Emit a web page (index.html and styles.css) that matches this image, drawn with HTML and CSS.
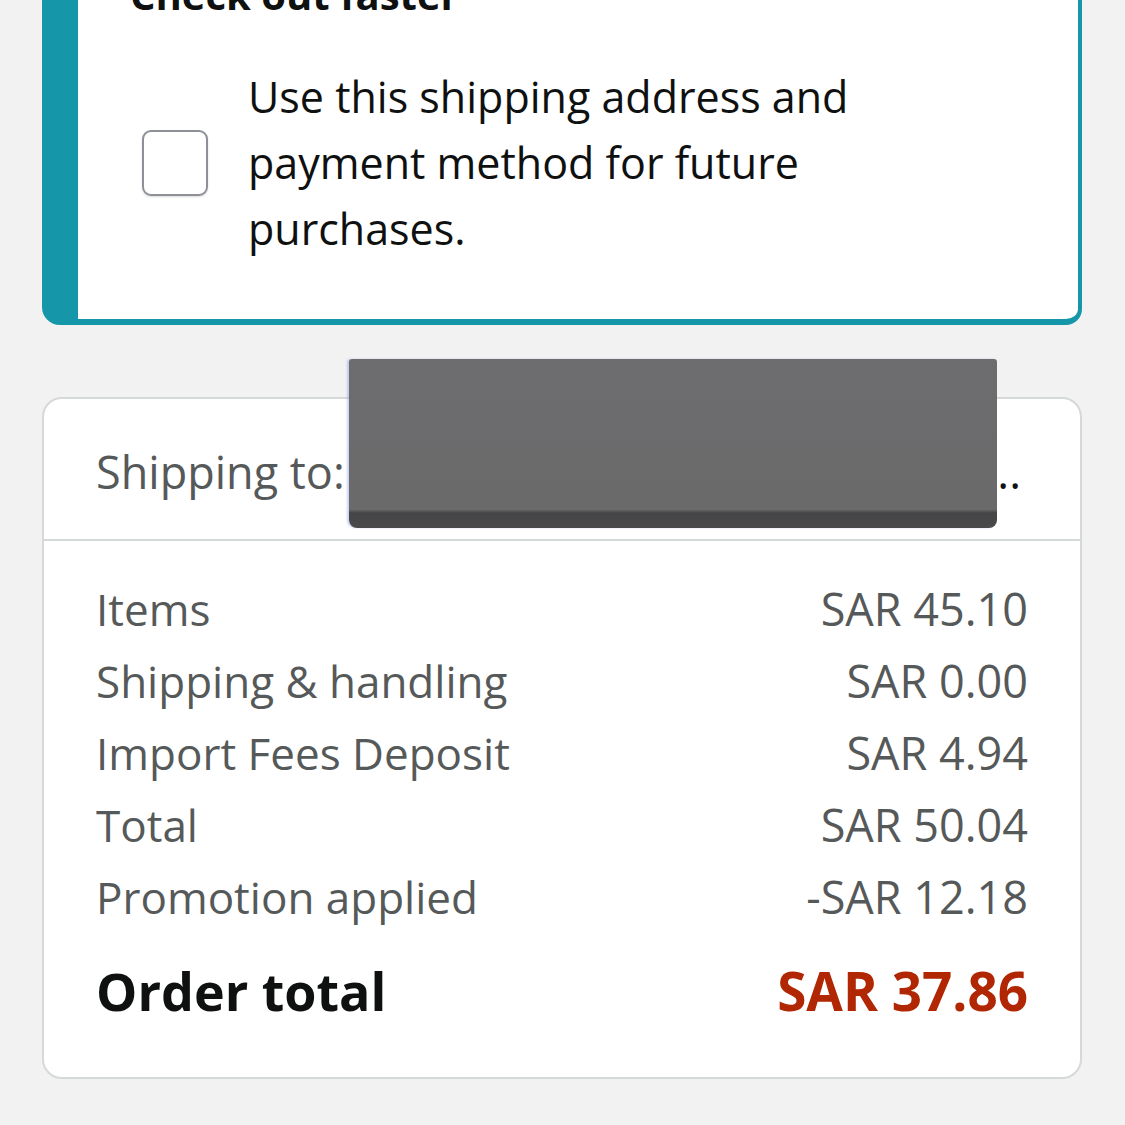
FILE: index.html
```html
<!DOCTYPE html>
<html lang="en">
<head>
    <meta charset="UTF-8">
    <meta name="viewport" content="width=device-width, initial-scale=1.0">
    <title>Checkout</title>
    <link rel="stylesheet" href="styles.css">
</head>
<body>
    <div class="page">
        <div class="faster-card">
            <h2 class="faster-title">Check out faster</h2>
            <label class="save-row">
                <span class="checkbox"></span>
                <span class="save-text">Use this shipping address and payment method for future purchases.</span>
            </label>
        </div>

        <div class="summary-card">
            <div class="ship-row">
                <span class="ship-label">Shipping to:</span>
                <span class="ship-addr">...</span>
                <div class="redact"></div>
            </div>
            <div class="lines">
                <div class="line"><span>Items</span><span>SAR 45.10</span></div>
                <div class="line"><span>Shipping &amp; handling</span><span>SAR 0.00</span></div>
                <div class="line"><span>Import Fees Deposit</span><span>SAR 4.94</span></div>
                <div class="line"><span>Total</span><span>SAR 50.04</span></div>
                <div class="line"><span>Promotion applied</span><span>-SAR 12.18</span></div>
                <div class="line total"><span>Order total</span><span class="price">SAR 37.86</span></div>
            </div>
        </div>
    </div>
</body>
</html>
```

FILE: styles.css
```css
body { margin: 0; background: #f2f2f2; font-family: "Open Sans", "Noto Sans", Arial, sans-serif; color: #0f1111; }
.page { padding: 0 43px 0 42px; height: 1125px; overflow: hidden; }

/* check out faster */
.faster-card { margin-top: -62px; background: #fff; border: 4px solid #1596a9; border-left-width: 36px; border-bottom-width: 6px; border-radius: 0 0 16px 18px; padding: 0 40px 57px 52px; }
.faster-title { margin: 0; font-size: 40px; line-height: 50px; font-weight: 700; padding-top: 28px; }
.save-row { display: flex; align-items: center; margin-top: 44px; }
.checkbox { width: 62px; height: 62px; border: 2px solid #8d9096; border-radius: 9px; margin-left: 12px; flex-shrink: 0; box-shadow: 0 1px 2px rgba(0,0,0,0.15); }
.save-text { margin-left: 40px; font-size: 43px; line-height: 66px; max-width: 660px; }

/* summary */
.summary-card { position: relative; margin-top: 72px; background: #fff; border: 2px solid #d5d9d9; border-radius: 20px; }
.ship-row { position: relative; display: flex; align-items: center; height: 140px; padding: 0 59px 0 52px; border-bottom: 2px solid #d5d9d9; font-size: 45px; color: #565959; }
.ship-label { padding-top: 4px; }
.ship-addr { margin-left: auto; color: #0f1111; padding-top: 4px; }
.redact { position: absolute; left: 305px; top: -40px; width: 648px; height: 169px; border-radius: 3px 3px 8px 8px; background: linear-gradient(to bottom, #6d6d6f 0%, #6a6a6b 89%, #454547 91%, #4a4a4c 100%); box-shadow: -2px 0 2px rgba(110,130,230,0.35); }

.lines { padding: 32px 52px 50px 52px; }
.line { display: flex; justify-content: space-between; font-size: 45px; line-height: 72px; color: #565959; }
.line span:first-child { font-size: 44px; }
.line.total { margin-top: 22px; font-size: 53px; font-weight: 700; color: #0f1111; }
.line.total span:first-child { font-size: 52px; }
.line .price { color: #b12704; }
```
